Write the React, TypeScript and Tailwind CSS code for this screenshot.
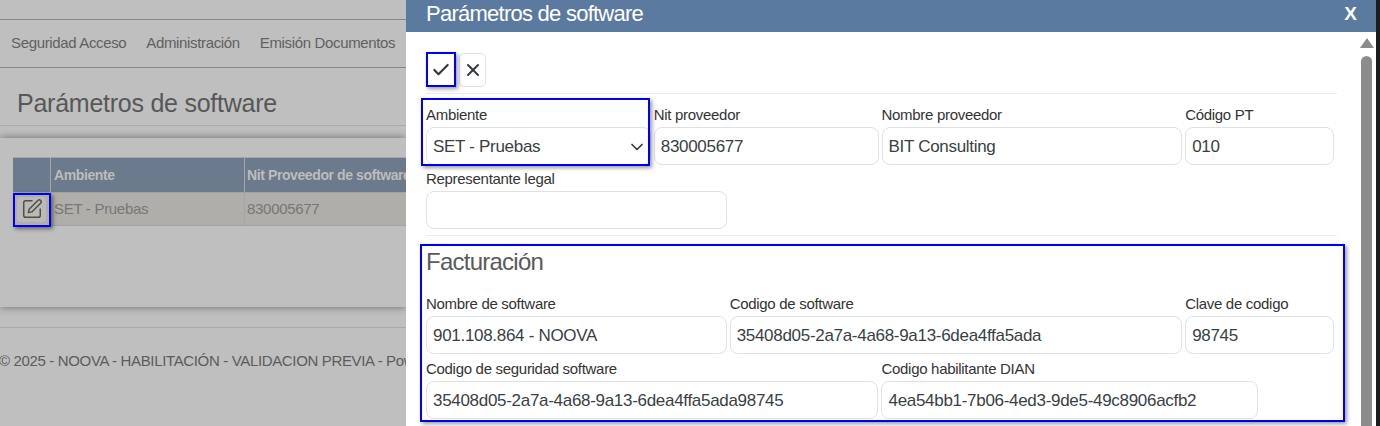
import { Check, ChevronDown, SquarePen, X } from 'lucide-react'

const FONT = "font-['Liberation_Sans',Arial,sans-serif]"

type FieldProps = {
  label: string
  value?: string
  span: string
  select?: boolean
}

function Field({ label, value = '', span, select }: FieldProps) {
  return (
    <div className={`${span} pr-[3px]`}>
      <div className="h-[26px] pt-[4px] text-[15px] leading-[20px] tracking-[-0.3px] text-[#343434]">{label}</div>
      <div className="flex h-[38px] items-center justify-between rounded-[8px] border border-[#dee2e6] bg-white pl-[6px] pr-[3px] pt-[1px] text-[17px] text-[#3a3f44] tracking-[-0.3px]">
        <span>{value}</span>
        {select && <ChevronDown size={20} strokeWidth={2} className="text-[#343a40]" />}
      </div>
    </div>
  )
}

export default function App() {
  return (
    <div className={`flex h-[426px] w-[1380px] overflow-hidden bg-[#1c1c1c] ${FONT}`}>
      {/* dimmed page behind the dialog */}
      <div className="w-[406px] shrink-0 overflow-hidden bg-[#bfbfbf] text-[#5f5f5f]">
        <div className="h-[20px] border-b border-[#858585]" />
        <div className="flex h-[48px] items-center gap-[20px] border-b border-[#858585] pl-[11px] text-[15px] tracking-[-0.35px] whitespace-nowrap">
          <span>Seguridad Acceso</span>
          <span>Administración</span>
          <span>Emisión Documentos</span>
        </div>
        <div className="h-[58px] border-b border-[#ababab] pl-[17px] pt-[17px] text-[25px] leading-[36px] tracking-[-0.25px] text-[#575757] whitespace-nowrap">
          Parámetros de software
        </div>
        <div className="mt-[12px] h-[169px] bg-[#bfbfbf] pl-[13px] pt-[19px] shadow-[0_0_8px_rgba(0,0,0,0.45)]">
          <div className="w-[600px] border-t border-[#a6a6a6]">
            <div className="flex h-[34px] bg-[#6b7a8c] text-[14px] font-bold leading-[34px] text-[#bdbdbd] tracking-[-0.4px] whitespace-nowrap">
              <div className="w-[38px] border-r border-[#a6a6a6]" />
              <div className="w-[194px] border-r border-[#a6a6a6] pl-[3px]">Ambiente</div>
              <div className="pl-[2px]">Nit Proveedor de software</div>
            </div>
            <div className="flex h-[34px] border-y border-[#a3a3a3] bg-[#b0aea9] text-[15px] leading-[32px] tracking-[-0.3px] text-[#777777]">
              <div className="relative flex w-[38px] items-center justify-center border-r border-[#a6a6a6]">
                <div className="flex h-[25px] w-[29px] items-center justify-center rounded-[4px] bg-[#bcbab6]">
                  <SquarePen size={22} strokeWidth={1.6} className="text-[#4f4f4f]" />
                </div>
                <div className="absolute left-0 top-0 h-[34px] w-[38px] border-[2px] border-[#0000f0] shadow-[2px_2px_4px_rgba(0,0,0,0.45)]" />
              </div>
              <div className="w-[194px] border-r border-[#a6a6a6] pl-[3px]">SET - Pruebas</div>
              <div className="pl-[2px]">830005677</div>
            </div>
          </div>
        </div>
        <div className="mt-[20px] border-t border-[#a9a9a9] pt-[21px] text-[15px] leading-[24px] tracking-[-0.35px] text-[#5c5c5c] whitespace-nowrap">
          <span className="ml-[-1px]">© 2025 - NOOVA - HABILITACIÓN - VALIDACION PREVIA - Powered by</span>
        </div>
      </div>

      {/* dialog */}
      <div className="flex w-[970px] shrink-0 flex-col bg-white">
        <div className="flex h-[32px] shrink-0 items-center justify-between bg-[#5b7aa0] pb-[4px] pl-[20px] pr-[19px] text-white">
          <span className="text-[22px] leading-[26px] tracking-[-0.75px]">Parámetros de software</span>
          <span className="text-[19px] font-bold">X</span>
        </div>
        <div className="flex min-h-0 flex-1">
          <div className="w-[953px] pl-[20px]">
            <div className="w-[911px]">
              <div className="flex h-[62px] items-end gap-[3px] border-b border-[#e9ecef] pb-[6px]">
                <button className="relative flex h-[35px] w-[30px] items-center justify-center text-[#343a40]">
                  <Check size={20} strokeWidth={2.6} />
                  <span className="absolute inset-0 border-[2px] border-[#0000f0] shadow-[2px_2px_4px_rgba(0,0,0,0.4)]" />
                </button>
                <button className="flex h-[34px] w-[27px] items-center justify-center rounded-[5px] border border-[#dee2e6] text-[#343a40]">
                  <X size={20} strokeWidth={2.4} />
                </button>
              </div>
              <div className="relative grid grid-cols-12 pb-[6px] pt-[7px]">
                <Field span="col-span-3" label="Ambiente" value="SET - Pruebas" select />
                <Field span="col-span-3" label="Nit proveedor" value="830005677" />
                <Field span="col-span-4" label="Nombre proveedor" value="BIT Consulting" />
                <Field span="col-span-2" label="Código PT" value="010" />
                <Field span="col-span-4" label="Representante legal" />
                <div className="absolute left-[-5px] top-[4px] h-[68px] w-[229px] border-[2px] border-[#0000f0] shadow-[2px_2px_4px_rgba(0,0,0,0.4)]" />
              </div>
              <div className="relative border-t border-[#e9ecef] pt-[8px]">
                <div className="h-[46px] text-[24px] leading-[36px] tracking-[-0.75px] text-[#5a5a5a]">Facturación</div>
                <div className="grid grid-cols-12 gap-y-[1px]">
                  <Field span="col-span-4" label="Nombre de software" value="901.108.864 - NOOVA" />
                  <Field span="col-span-6" label="Codigo de software" value="35408d05-2a7a-4a68-9a13-6dea4ffa5ada" />
                  <Field span="col-span-2" label="Clave de codigo" value="98745" />
                  <Field span="col-span-6" label="Codigo de seguridad software" value="35408d05-2a7a-4a68-9a13-6dea4ffa5ada98745" />
                  <Field span="col-span-5" label="Codigo habilitante DIAN" value="4ea54bb1-7b06-4ed3-9de5-49c8906acfb2" />
                </div>
                <div className="absolute left-[-6px] top-[8px] h-[178px] w-[925px] border-[2px] border-[#0000f0] shadow-[2px_2px_4px_rgba(0,0,0,0.4)]" />
              </div>
            </div>
          </div>
          {/* scrollbar */}
          <div className="flex w-[15px] flex-col items-center pt-[6px]">
            <div className="h-0 w-0 border-x-[7px] border-b-[10px] border-x-transparent border-b-[#8c8c8c]" />
            <div className="mt-[8px] w-[11px] flex-1 rounded-t-[6px] bg-[#8c8c8c]" />
          </div>
        </div>
      </div>
    </div>
  )
}
